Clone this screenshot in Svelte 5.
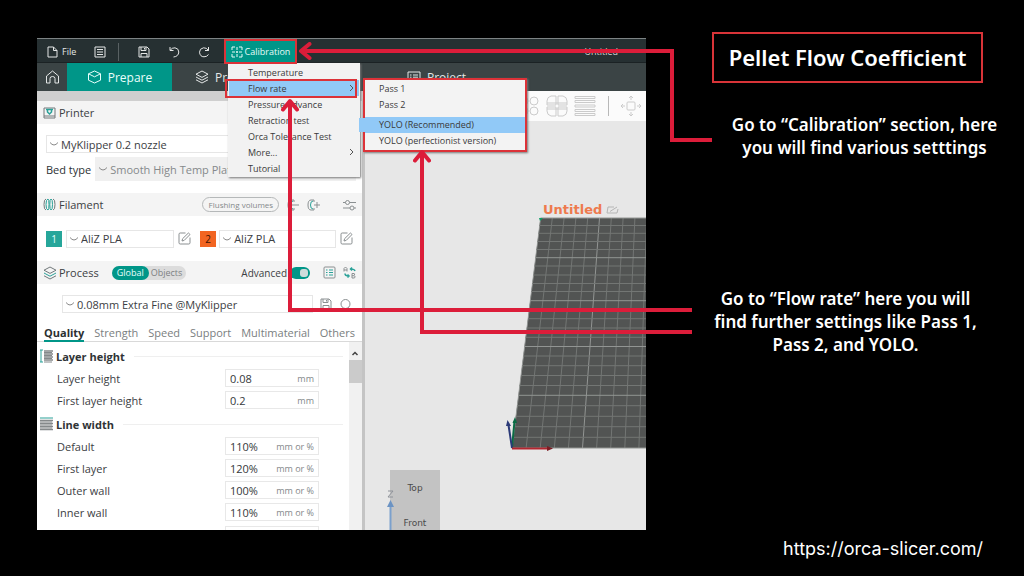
<script>
  const calibrationItems = [
    { label: 'Temperature' },
    { label: 'Flow rate', more: true, active: true },
    { label: 'Pressure advance' },
    { label: 'Retraction test' },
    { label: 'Orca Tolerance Test' },
    { label: 'More...', more: true },
    { label: 'Tutorial' }
  ];
  const passes = ['Pass 1', 'Pass 2'];
  const yolo = ['YOLO (Recommended)', 'YOLO (perfectionist version)'];
  const settingTabs = ['Quality', 'Strength', 'Speed', 'Support', 'Multimaterial', 'Others'];
  const groups = [
    {
      title: 'Layer height',
      icon: 'layers',
      rows: [
        { label: 'Layer height', value: '0.08', unit: 'mm' },
        { label: 'First layer height', value: '0.2', unit: 'mm' }
      ]
    },
    {
      title: 'Line width',
      icon: 'lines',
      rows: [
        { label: 'Default', value: '110%', unit: 'mm or %' },
        { label: 'First layer', value: '120%', unit: 'mm or %' },
        { label: 'Outer wall', value: '100%', unit: 'mm or %' },
        { label: 'Inner wall', value: '110%', unit: 'mm or %' }
      ]
    }
  ];

  // Build plate grid in perspective: every fifth line is stronger.
  const bedTop = 97;
  const bedBottom = 327;
  const columns = Array.from({ length: 30 }, (_, i) => ({
    x1: 175.5 + 11.8 * i,
    x2: 147 + 14.1 * i,
    major: i % 5 === 0
  }));
  const rowYs = [97, 104.5, 112.3, 120.5, 128.5, 136.7, 145, 154, 162.5, 170.5, 179.7, 188.5, 197.7, 207, 216.3, 225.5, 235, 244.7, 254.5, 264.5, 274.3, 284.7, 295.3, 305.7, 316.3, 327];
  const rows = rowYs.map((y, i) => ({
    y,
    x: 175.5 - ((y - bedTop) / (bedBottom - bedTop)) * 28.5,
    major: i % 5 === 0
  }));
</script>

{#snippet chevron()}
  <svg class="chev" width="10" height="6" viewBox="0 0 10 6"><path d="M1 1.5Q3 4 5 4T9 1.5" /></svg>
{/snippet}

{#snippet editIcon()}
  <svg class="ico" width="13" height="13" viewBox="0 0 13 13">
    <path d="M7.5 1H2.2Q1 1 1 2.2V10.8Q1 12 2.200 12H10.800Q12 12 12 10.800V5.500M4 9L4.600 6.700L10.400 1L12 2.500L6.200 8.400Z" />
  </svg>
{/snippet}

{#snippet saveIcon()}
  <svg class="ico" width="12" height="12" viewBox="0 0 12 12">
    <path d="M1 1H9L11 3V11H1ZM3 1V4.500H8V1M3 11V7.500H9V11M6.500 2V3.500" />
  </svg>
{/snippet}

{#snippet layersIcon(tinted)}
  <svg class="ico" width="14" height="14" viewBox="0 0 14 14">
    <path d="M7 1L13 4.200L7 7.400L1 4.200Z" />
    <path class:teal={tinted} d="M1 7L7 10.200L13 7" />
    <path d="M1 9.800L7 13L13 9.800" />
  </svg>
{/snippet}

<main class="slide">
  <section class="window">
    <header class="titlebar">
      <button class="file">
        <svg class="ico" width="11" height="12" viewBox="0 0 11 12"><path d="M1 1H6.500L10 4.500V11H1ZM6.500 1V4.500H10" /></svg>
        File
      </button>
      <button class="tool list" aria-label="Menu">
        <svg class="ico" width="12" height="12" viewBox="0 0 12 12"><path d="M1 1H11V11H1ZM3 3.500H9M3 6H9M3 8.500H9" /></svg>
      </button>
      <span class="divider"></span>
      <button class="tool save" aria-label="Save">{@render saveIcon()}</button>
      <button class="tool undo" aria-label="Undo">
        <svg class="ico" width="12" height="12" viewBox="0 0 12 12"><path d="M2 1V4.500H5.500M2 4.500Q4 1.500 7 1.800Q10.800 2.500 10.800 6Q10.500 10.500 5.500 11" /></svg>
      </button>
      <button class="tool redo" aria-label="Redo">
        <svg class="ico" width="12" height="12" viewBox="0 0 12 12"><path d="M10.500 1V4.500H7M10.500 4.500Q8.500 1.500 5.500 1.800Q1.500 2.500 1.500 6.200Q2 10.800 6 10.800Q9 10.800 10.500 8.500" /></svg>
      </button>
      <button class="calibration">
        <svg class="ico" width="12" height="12" viewBox="0 0 12 12"><path d="M1 4V1H4M8 1H11V4M11 8V11H8M4 11H1V8M6 1V4M6 8V11M1 6H4M8 6H11M5 6H7M6 5V7" /></svg>
        Calibration
      </button>
      <span class="doc">Untitled</span>
    </header>

    <nav class="tabs">
      <button class="home" aria-label="Home">
        <svg class="ico" width="15" height="14" viewBox="0 0 15 14"><path d="M1.500 6L7.500 1L13.500 6V13H10V8.500Q10 6.500 7.500 6.500T5 8.500V13H1.500Z" /></svg>
      </button>
      <button class="prepare">
        <svg class="ico" width="15" height="14" viewBox="0 0 15 14"><path d="M7.500 1L13.500 3.800V10.200L7.500 13L1.500 10.200V3.800ZM1.500 3.800L7.500 6.800L13.500 3.800" /></svg>
        Prepare
      </button>
      <button class="preview">{@render layersIcon(false)} Preview</button>
      <button class="project">
        <svg class="ico" width="14" height="12" viewBox="0 0 14 12"><path d="M1 1H13V11H1ZM3 4H4.500M6 4H11M3 6.200H4.500M6 6.200H11M3 8.500H4.500M6 8.500H11" /></svg>
        Project
      </button>
    </nav>

    <div class="body">
      <aside class="sidebar">
        <h2 class="head">
          <svg class="ico" width="13" height="12" viewBox="0 0 13 12"><path d="M1 1H12V11H1ZM1 9H12" /><path class="teal thick" d="M3 2.500H10M4.500 2.500V5L6.500 7L8.500 5V2.500" /></svg>
          Printer
        </h2>
        <div class="printer">
          <label class="pick wide">
            {@render chevron()}
            <select aria-label="Printer preset"><option>MyKlipper 0.2 nozzle</option></select>
          </label>
          <div class="bed">
            <label for="bed">Bed type</label>
            <span class="pick bedpick">
              {@render chevron()}
              <select id="bed"><option>Smooth High Temp Plate</option></select>
            </span>
          </div>
        </div>

        <h2 class="head">
          <svg class="ico" width="13" height="13" viewBox="0 0 13 13"><path d="M3 1Q1 1 1 6.500T3 12M10 1Q12 1 12 6.500T10 12" /><path class="teal" d="M5 1Q3 1 3 6.500T5 12Q6 12 6 6.500T5 1M8 1Q6.800 1 6.800 6.500T8 12Q9.500 12 9.500 6.500T8 1" /></svg>
          Filament
          <button class="flush">Flushing volumes</button>
          <button class="mini minus" aria-label="Remove filament">
            <svg class="ico" width="13" height="12" viewBox="0 0 13 12"><path d="M4 1Q1 1 1 6T4 11M5 6H12M5 1H7V3M5 11H7V9" /><path class="teal" d="M6 2Q3.500 2 3.500 6T6 10" /></svg>
          </button>
          <button class="mini plus" aria-label="Add filament">
            <svg class="ico" width="13" height="12" viewBox="0 0 13 12"><path d="M4 1Q1 1 1 6T4 11M7 6H13M10 3V9M4 1H7V3M4 11H7V9" /><path class="teal" d="M6 2Q3.500 2 3.500 6T6 10" /></svg>
          </button>
          <button class="mini sliders" aria-label="Filament settings">
            <svg class="ico" width="13" height="12" viewBox="0 0 13 12"><path d="M0 3.500H2.500M6.500 3.500H13M0 9H7M11 9H13" /><circle cx="4.500" cy="3.500" r="2" /><circle cx="9" cy="9" r="2" /></svg>
          </button>
        </h2>
        <div class="filaments">
          <span class="swatch one">1</span>
          <label class="pick first-pick">{@render chevron()}<select aria-label="Filament 1"><option>AliZ PLA</option></select></label>
          <button class="mini" aria-label="Edit filament 1">{@render editIcon()}</button>
          <span class="swatch two">2</span>
          <label class="pick second-pick">{@render chevron()}<select aria-label="Filament 2"><option>AliZ PLA</option></select></label>
          <button class="mini" aria-label="Edit filament 2">{@render editIcon()}</button>
        </div>

        <h2 class="head">
          <span class="tinted">{@render layersIcon(true)}</span>
          Process
          <span class="scope"><button class="on">Global</button><button>Objects</button></span>
          <label class="advanced">Advanced <input type="checkbox" checked /></label>
          <button class="mini parlist" aria-label="Parameter list">
            <svg class="ico" width="13" height="13" viewBox="0 0 13 13"><rect x="1" y="1" width="11" height="11" rx="1" /><path class="teal" d="M3 4H4.500M6 4H10M3 6.500H4.500M6 6.500H10M3 9H4.500M6 9H10" /></svg>
          </button>
          <button class="mini compare" aria-label="Compare presets">
            <svg class="ico" width="13" height="13" viewBox="0 0 13 13"><path d="M1 5.500V2.500L2.500 1L4 2.500V5.500M1 4H4M9 7.500V12H11Q12 12 12 10.800T11 9.700H9M9 7.500H11Q12 7.500 11.500 9" /><path class="teal thick" d="M12 5Q11.500 3 7.500 3M9 1.500L7.500 3L9 4.500M2 7.500Q2 10 6 10M4.500 8.500L6 10L4.500 11.500" /></svg>
          </button>
        </h2>
        <div class="preset">
          <label class="pick">{@render chevron()}<select aria-label="Process preset"><option>0.08mm Extra Fine @MyKlipper</option></select></label>
          <button class="mini" aria-label="Save preset">{@render saveIcon()}</button>
          <button class="mini" aria-label="Search">
            <svg class="ico" width="13" height="13" viewBox="0 0 13 13"><circle cx="6.500" cy="6" r="4.500" /><path d="M9.500 9.500L12 12" /></svg>
          </button>
        </div>

        <nav class="settabs">
          {#each settingTabs as tab, i}
            <button class:current={i === 0}>{tab}</button>
          {/each}
        </nav>

        <div class="settings">
          <div class="groups">
            {#each groups as group, g}
              <section class="group">
                <h3>
                  {#if group.icon === 'layers'}
                    <svg class="ico" width="13" height="14" viewBox="0 0 13 14"><path class="teal" d="M1 1V13M0 1H3M0 13H3" /><path class="thick" d="M4 2H13M4 5H13M4 8H13M4 11H13" /><path d="M4 3.500H12M4 6.500H12M4 9.500H12M4 13H12" /></svg>
                  {:else}
                    <svg class="ico" width="13" height="14" viewBox="0 0 13 14"><path class="teal" d="M0 1H13" /><path class="thick" d="M0 3.500H13M0 6.500H13M0 9.500H13M0 12.500H13" /><path d="M0 5H12M0 8H12M0 11H12" /></svg>
                  {/if}
                  {group.title}
                  <span class="rule"></span>
                </h3>
                {#each group.rows as row, r}
                  <div class="row">
                    <label for="f{g}{r}">{row.label}</label>
                    <span class="field"><input id="f{g}{r}" value={row.value} /><span class="unit">{row.unit}</span></span>
                  </div>
                {/each}
              </section>
            {/each}
            <div class="row next"><span class="field"></span></div>
          </div>
          <div class="scroll">
            <svg width="12" height="13" viewBox="0 0 12 13"><path d="M3.500 8L6 5.500L8.500 8" /></svg>
            <span class="thumb"></span>
          </div>
        </div>
      </aside>

      <section class="stage">
        <div class="stagebar">
          <svg width="22" height="22" viewBox="0 0 22 22"><circle cx="6" cy="6" r="4" /><circle cx="16" cy="6" r="4" /><circle cx="6" cy="16" r="4" /><circle cx="16" cy="16" r="4" /></svg>
          <svg width="22" height="22" viewBox="0 0 22 22"><path d="M10 10V1H5Q1 2 1 6V10ZM12 10V1H17Q21 2 21 6V10ZM10 12V21H5Q1 20 1 16V12ZM12 12V21H17Q21 20 21 16V12ZM1 8H21M1 14H21" /></svg>
          <svg width="22" height="22" viewBox="0 0 22 22"><path d="M1 1.500H21V3.500H1ZM1 5.500H21V7.500H1ZM1 10H21V12H1ZM1 14.500H21V16.500H1ZM1 18.500H21V20.500H1Z" /></svg>
          <span class="bar"></span>
          <svg width="22" height="22" viewBox="0 0 22 22"><rect x="7" y="7" width="8" height="8" rx="1" /><path d="M11 5V1M9 3L11 1L13 3M11 17V21M9 19L11 21L13 19M5 11H1M3 9L1 11L3 13M17 11H21M19 9L21 11L19 13" /></svg>
        </div>
        <svg class="plate" width="600" height="420" viewBox="0 0 600 420">
          <path d="M175.500 97H520L560 327H147Z" fill="#525453" />
          <g clip-path="url(#plate-edge)">
            {#each columns as c}
              <line x1={c.x1} y1={bedTop} x2={c.x2} y2={bedBottom} class:major={c.major} />
            {/each}
            {#each rows as r}
              <line x1={r.x} y1={r.y} x2="560" y2={r.y} class:major={r.major} />
            {/each}
          </g>
          <clipPath id="plate-edge"><path d="M175 96H520L560 328H146Z" /></clipPath>
          <path d="M174 97H178L175 100Z" fill="#0f9d68" />
          <path d="M147 327L149.500 300" stroke="#0b6b45" stroke-width="2" />
          <path d="M147.500 302L150 296L152 302Z" fill="#0b6b45" />
          <path d="M147 327L143.500 304" stroke="#2b3a78" stroke-width="2" />
          <path d="M141 305L142.500 299L146 305Z" fill="#2b3a78" />
          <path d="M147 327.500H184" stroke="#b32630" stroke-width="2" />
          <path d="M182 325L188 327.500L182 330Z" fill="#7c1d24" />
        </svg>
        <span class="platename">
          Untitled
          <svg width="13" height="8" viewBox="0 0 13 8"><path d="M8 1H2L1 7H11L12 3M4 5.500L11 1" /></svg>
        </span>
        <div class="cube">
          <span>Top</span>
          <span>Front</span>
        </div>
        <svg class="zaxis" width="9" height="40" viewBox="0 0 9 40">
          <path d="M2 1H7L2 7H7" stroke="#8e9299" fill="none" />
          <path d="M4.500 16V40" stroke="#7ba0cc" stroke-width="2" />
          <path d="M1 17L4.500 10L8 17Z" fill="#6b93c3" />
        </svg>
      </section>
    </div>

    <div class="menu">
      {#each calibrationItems as item}
        <button class:active={item.active}>
          {item.label}
          {#if item.more}<svg width="5" height="8" viewBox="0 0 5 8"><path d="M1 1L4 4L1 7" /></svg>{/if}
        </button>
      {/each}
      <span class="mark"></span>
    </div>

    <div class="submenu">
      {#each passes as item}<button>{item}</button>{/each}
      <hr />
      {#each yolo as item, i}<button class:active={i === 0}>{item}</button>{/each}
    </div>

    <span class="arrow to-calibration"></span>
    <span class="arrow to-calibration-tail"></span>
    <svg class="tip tip-calibration" width="14" height="18" viewBox="0 0 14 18"><path d="M11.500 2L3 9L11.500 16" /></svg>
    <span class="arrow to-flow"></span>
    <svg class="tip tip-flow" width="18" height="14" viewBox="0 0 18 14"><path d="M2 11.500L9 3L16 11.500" /></svg>
    <span class="arrow to-yolo"></span>
    <svg class="tip tip-yolo" width="18" height="14" viewBox="0 0 18 14"><path d="M2 11.500L9 3L16 11.500" /></svg>
  </section>

  <section class="notes">
    <h1>Pellet Flow Coefficient</h1>
    <p class="first">Go to “Calibration” section, here<br />you will find various setttings</p>
    <p class="second">Go to “Flow rate” here you will<br />find further settings like Pass 1,<br />Pass 2, and YOLO.</p>
    <a href="https://orca-slicer.com/">https://orca-slicer.com/</a>
  </section>
</main>

<style>
  :global(body) { margin: 0; background: #000; }
  * { box-sizing: border-box; }
  button, select, input {
    font: inherit;
    color: inherit;
    background: none;
    border: 0;
    padding: 0;
    margin: 0;
    border-radius: 0;
    outline: 0;
  }
  h1, h2, h3, p { margin: 0; font-weight: inherit; }
  svg { flex: none; display: block; }
  .ico { fill: none; stroke: currentColor; stroke-width: 1; }
  .ico .teal { stroke: #2aa198; }
  .ico .thick { stroke-width: 1.5; }

  .slide {
    display: grid;
    grid-template-columns: minmax(0, 609fr) minmax(0, 378fr);
    grid-template-rows: minmax(0, 1fr);
    height: 100vh;
    min-height: 520px;
    padding-left: 37px;
    background: #000;
    font-family: "Open Sans", "Noto Sans", sans-serif;
  }

  .window {
    position: relative;
    min-width: 0;
    margin: 38px 0 46px;
    display: flex;
    flex-direction: column;
    color: #3c4043;
    font-size: 11px;
    white-space: nowrap;
  }
  .titlebar {
    display: flex;
    align-items: center;
    height: 25px;
    flex: none;
    padding-top: 2px;
    background: #263032;
    border-top: 1px solid #7d8384;
    border-bottom: 1px solid #1b2224;
    color: #e4e6e6;
    font-size: 9px;
  }
  .titlebar > * { flex: none; }
  .file { display: flex; align-items: center; gap: 4px; margin-left: 10px; width: 47px; }
  .tool { display: flex; }
  .divider { width: 1px; height: 18px; background: #596163; margin: 0 19px 0 12px; }
  .undo, .redo { margin-left: 18px; }
  .calibration {
    position: relative;
    z-index: 3;
    display: flex;
    align-items: center;
    justify-content: center;
    gap: 2px;
    width: 73px;
    height: 25px;
    margin-left: 14px;
    background: #009688;
    border: 2px solid #dc3238;
    color: #e8fbf8;
  }
  .doc { margin: 0 28px 0 auto; color: #d4d7d7; }

  .tabs { display: flex; height: 28px; flex: none; background: #3b4445; color: #e4e7e7; font-size: 12px; overflow: hidden; }
  .tabs button { display: flex; align-items: center; gap: 6px; flex: none; }
  .tabs .home { width: 30px; justify-content: center; }
  .tabs .prepare { width: 105px; justify-content: center; background: #009688; color: #e9fffc; }
  .tabs .preview { padding-left: 23px; width: 213px; }
  .tabs .project { padding-left: 22px; }

  .body { flex: 1; min-height: 0; display: flex; }
  .sidebar {
    flex: none;
    width: 328px;
    display: flex;
    flex-direction: column;
    overflow: hidden;
    background: #fff;
    border-top: 10px solid #cfcfcf;
    border-right: 3px solid #c4c4c4;
  }
  .head {
    display: flex;
    align-items: center;
    flex: none;
    gap: 3px;
    height: 23px;
    padding: 0 6px;
    background: #f4f4f4;
    font-size: 11px;
  }
  .head > .ico, .tinted { color: #72797b; }
  .tinted { margin-right: -1px; }
  .mini { display: flex; color: #8a8f91; }
  .pick {
    display: flex;
    align-items: center;
    gap: 2px;
    height: 18px;
    padding-left: 2px;
    border: 1px solid #e6e6e6;
    background: #fff;
    min-width: 0;
  }
  .pick select { appearance: none; flex: 1; min-width: 0; height: 16px; }
  .chev { fill: none; stroke: #888; stroke-width: 1; }
  .printer { padding: 11px 6px 12px 9px; display: flex; flex-direction: column; gap: 4px; flex: none; }
  .bed { display: flex; align-items: center; gap: 4px; color: #2e3234; }
  .bedpick { flex: 1; height: 24px; background: #f0f0f0; border-color: #f0f0f0; color: #85898b; }
  .flush {
    height: 15px;
    width: 77px;
    margin-left: 96px;
    border: 1px solid #b5b8b9;
    border-radius: 8px;
    color: #84898b;
    font-size: 8px;
    line-height: 13px;
  }
  .minus { margin-left: 5px; }
  .plus { margin-left: 4px; }
  .sliders { margin-left: auto; }
  .filaments { display: flex; align-items: center; flex: none; padding: 0 9px; height: 45px; }
  .filaments .first-pick { flex: 108 1 0; margin: 0 4px; }
  .filaments .second-pick { flex: 117 1 0; margin: 0 4px 0 3px; }
  .swatch { width: 16px; height: 16px; font-size: 10px; line-height: 16px; text-align: center; background: #26a69a; color: #e5fffb; }
  .swatch.two { background: #f26522; color: #3c1404; margin-left: 9px; }

  .scope { display: flex; margin-left: 10px; border-radius: 8px; background: #dcdcdc; font-size: 9px; line-height: 14px; color: #7d8183; }
  .scope button { padding: 0 4px 0 2px; }
  .scope .on { padding: 0 5px; border-radius: 8px; background: #009688; color: #e9fffc; }
  .advanced { display: flex; align-items: center; gap: 3px; margin-left: auto; font-size: 10px; }
  .advanced input { appearance: none; width: 20px; height: 12px; border-radius: 6px; background: #009688; display: flex; justify-content: flex-end; padding: 2px; }
  .advanced input::after { content: ''; width: 8px; height: 8px; border-radius: 3px; background: #cfdcdb; }
  .parlist { margin-left: 10px; }
  .compare { margin-left: 4px; }
  .preset { display: flex; align-items: center; gap: 7px; flex: none; padding: 11px 10px 11px 25px; }
  .preset .pick { flex: 1; }

  .settabs { display: flex; justify-content: space-between; flex: none; height: 18px; padding: 0 7px; border-bottom: 1px solid #d9d9d9; color: #7a7e80; }
  .settabs button { line-height: 15px; height: 18px; border-bottom: 2px solid transparent; }
  .settabs .current { font-weight: 700; color: #2c3032; border-color: #009688; }

  .settings { flex: 1; min-height: 0; display: flex; overflow: hidden; }
  .groups { flex: 1; padding-top: 3px; }
  .group { margin-bottom: 1px; }
  h3 { display: flex; align-items: center; gap: 3px; height: 22px; padding: 0 6px 0 3px; font-size: 11px; font-weight: 700; color: #303436; }
  .group + .group { margin-top: 2px; }
  h3 .ico { color: #85898b; }
  .rule { flex: 1; height: 1px; margin-left: 6px; background: #efefef; }
  .row { display: flex; align-items: center; height: 22px; padding-left: 20px; }
  .row label { width: 168px; }
  .next { padding-left: 188px; }
  .field { display: flex; align-items: center; width: 94px; height: 18px; padding: 0 4px; border: 1px solid #e8e8e8; }
  .field input { flex: 1; width: 0; min-width: 0; color: #34383a; }
  .unit { font-size: 9px; color: #84888a; }
  .scroll { width: 13px; padding-top: 5px; background: #f1f1f1; }
  .scroll path { fill: none; stroke: #444; stroke-width: 1.5; }
  .thumb { display: block; height: 23px; background: #cbcbcb; }

  .stage { position: relative; flex: 1; min-width: 0; overflow: hidden; background: #e7e7e7; }
  .stagebar {
    display: flex;
    align-items: center;
    justify-content: flex-end;
    gap: 6px;
    height: 30px;
    padding-right: 4px;
    background: #fbfbfb;
  }
  .stagebar svg { fill: none; stroke: #cbcbcb; stroke-width: 1; }
  .bar { width: 1px; height: 20px; margin: 0 5px 0 6px; background: #b8b8b8; }
  .plate { position: absolute; left: 0; top: 30px; fill: none; }
  .plate line { stroke: #737674; stroke-width: 1; }
  .plate .major { stroke: #929593; }
  .platename {
    position: absolute;
    left: 178px;
    top: 112px;
    display: flex;
    align-items: center;
    gap: 4px;
    color: #ee7a4d;
    font: 700 13px/14px "DejaVu Sans", sans-serif;
  }
  .platename path { fill: none; stroke: #b5b5b5; }
  .cube {
    position: absolute;
    left: 25px;
    bottom: 0;
    width: 50px;
    height: 60px;
    padding-top: 12px;
    display: flex;
    flex-direction: column;
    align-items: center;
    gap: 23px;
    background: #c3c3c3;
    color: #4a4a4a;
    font: 9px/12px "DejaVu Sans", sans-serif;
  }
  .zaxis { position: absolute; left: 21px; bottom: 0; }

  .menu {
    position: absolute;
    left: 191px;
    top: 25px;
    width: 132px;
    padding: 1px;
    background: #f2f2f2;
    box-shadow: 1px 1px 2px #777;
    color: #3a3a3a;
    font-size: 9px;
  }
  .menu button {
    display: flex;
    align-items: center;
    justify-content: space-between;
    width: 100%;
    height: 16px;
    padding: 0 5px 0 19px;
  }
  .menu svg path { fill: none; stroke: #555; }
  .active { background: #91c9f7; }
  .mark { position: absolute; left: -3px; top: 16px; width: 132px; height: 19px; border: 2px solid #dc3238; }

  .submenu {
    position: absolute;
    left: 326px;
    top: 40px;
    width: 164px;
    padding: 1px 0;
    background: #f3f3f3;
    border: 2px solid #dc3238;
    box-shadow: 1px 1px 2px #777;
    color: #3a3a3a;
    font-size: 9px;
  }
  .submenu button { display: block; width: 100%; height: 16px; line-height: 16px; padding-left: 14px; text-align: left; }
  .submenu .active { box-shadow: -7px 0 0 -1px #91c9f7; }
  .submenu hr { border: 0; margin: 0; height: 4px; }

  .arrow { position: absolute; border: 0 solid #dc1d3a; }
  .to-calibration { left: 266px; right: -28px; top: 11px; height: 93px; border-width: 4px 4px 0 0; }
  .to-calibration-tail { right: -66px; width: 42px; top: 100px; height: 4px; background: #dc1d3a; }
  .to-flow { left: 251px; right: -46px; top: 64px; height: 210px; border-width: 0 0 4px 4px; }
  .to-yolo { left: 383px; right: -46px; top: 116px; height: 180px; border-width: 0 0 4px 4px; }
  .tip { position: absolute; z-index: 4; fill: none; stroke: #dc1d3a; stroke-width: 4; stroke-linecap: round; stroke-linejoin: round; }
  .tip-calibration { left: 261px; top: 4px; }
  .tip-flow { left: 244px; top: 60px; }
  .tip-yolo { left: 376px; top: 111px; }

  .notes {
    min-width: 0;
    display: flex;
    flex-direction: column;
    padding: 32px 41px 14px 66px;
    color: #fff;
    font-family: "Noto Sans", sans-serif;
    font-size: 17px;
    line-height: 23px;
    font-weight: 600;
    text-align: center;
    white-space: nowrap;
  }
  h1 { border: 2px solid #d93438; font-size: 22px; line-height: 47px; font-weight: 600; }
  .first { align-self: center; margin: 30px -17px 0 17px; }
  .second { align-self: center; margin: 128px 2px 0 -2px; }
  .notes a {
    margin-top: auto;
    align-self: flex-end;
    color: #fff;
    text-decoration: none;
    font: 400 18px/26px "Inter", sans-serif;
  }
</style>
